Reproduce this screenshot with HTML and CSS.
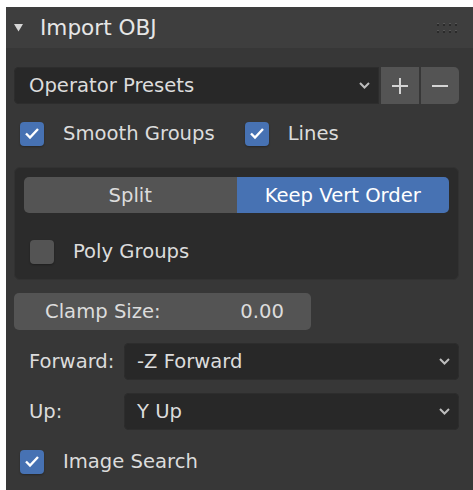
FILE: index.html
```html
<!DOCTYPE html>
<html>
<head>
<meta charset="utf-8">
<link rel="stylesheet" href="styles.css">
</head>
<body>
<div class="panel">
  <div class="header">
    <svg class="disclosure" width="9" height="8" viewBox="0 0 9 8"><path d="M0 0 H9 L4.5 7.5 Z" fill="#d6d6d6"/></svg>
    <span class="title">Import OBJ</span>
    <svg class="grip" width="22" height="12" viewBox="0 0 22 12">
      <g fill="#2a2a2a">
        <rect x="0" y="1" width="2" height="2"/><rect x="6" y="1" width="2" height="2"/><rect x="12" y="1" width="2" height="2"/><rect x="18" y="1" width="2" height="2"/>
        <rect x="0" y="8" width="2" height="2"/><rect x="6" y="8" width="2" height="2"/><rect x="12" y="8" width="2" height="2"/><rect x="18" y="8" width="2" height="2"/>
      </g>
      <g fill="#555555">
        <rect x="0" y="0" width="2" height="1"/><rect x="6" y="0" width="2" height="1"/><rect x="12" y="0" width="2" height="1"/><rect x="18" y="0" width="2" height="1"/>
        <rect x="0" y="7" width="2" height="1"/><rect x="6" y="7" width="2" height="1"/><rect x="12" y="7" width="2" height="1"/><rect x="18" y="7" width="2" height="1"/>
      </g>
    </svg>
  </div>
  <div class="content">
    <div class="presets">
      <div class="menu presets-menu">
        <span>Operator Presets</span>
        <svg class="chev" width="11" height="7" viewBox="0 0 11 7"><path d="M1 1 L5.5 5.5 L10 1" fill="none" stroke="#bdbdbd" stroke-width="2"/></svg>
      </div>
      <div class="tool-btn"><svg width="18" height="18" viewBox="0 0 18 18"><path d="M9 1 V17 M1 9 H17" stroke="#d4d4d4" stroke-width="2"/></svg></div>
      <div class="tool-btn last"><svg width="18" height="18" viewBox="0 0 18 18"><path d="M1 9 H17" stroke="#d4d4d4" stroke-width="2"/></svg></div>
    </div>

    <div class="row checks">
      <span class="check on"><svg width="16" height="13" viewBox="0 0 16 13"><path d="M2 6.5 L6 10.5 L14 2" fill="none" stroke="#fff" stroke-width="2.4"/></svg></span>
      <span class="label">Smooth Groups</span>
      <span class="check on second"><svg width="16" height="13" viewBox="0 0 16 13"><path d="M2 6.5 L6 10.5 L14 2" fill="none" stroke="#fff" stroke-width="2.4"/></svg></span>
      <span class="label">Lines</span>
    </div>

    <div class="box">
      <div class="segment">
        <div class="seg">Split</div>
        <div class="seg active">Keep Vert Order</div>
      </div>
      <div class="row poly">
        <span class="check"></span>
        <span class="label">Poly Groups</span>
      </div>
    </div>

    <div class="number">
      <span>Clamp Size:</span>
      <span>0.00</span>
    </div>

    <div class="prop">
      <span class="prop-label">Forward:</span>
      <div class="menu">
        <span>-Z Forward</span>
        <svg class="chev" width="11" height="7" viewBox="0 0 11 7"><path d="M1 1 L5.5 5.5 L10 1" fill="none" stroke="#bdbdbd" stroke-width="2"/></svg>
      </div>
    </div>

    <div class="prop">
      <span class="prop-label">Up:</span>
      <div class="menu">
        <span>Y Up</span>
        <svg class="chev" width="11" height="7" viewBox="0 0 11 7"><path d="M1 1 L5.5 5.5 L10 1" fill="none" stroke="#bdbdbd" stroke-width="2"/></svg>
      </div>
    </div>

    <div class="row image-search">
      <span class="check on"><svg width="16" height="13" viewBox="0 0 16 13"><path d="M2 6.5 L6 10.5 L14 2" fill="none" stroke="#fff" stroke-width="2.4"/></svg></span>
      <span class="label">Image Search</span>
    </div>
  </div>
</div>
</body>
</html>
```

FILE: styles.css
```css
html, body {
  margin: 0;
  padding: 0;
  background: #ffffff;
}

body {
  font-family: "DejaVu Sans", sans-serif;
  font-size: 19.6px;
  color: #dcdcdc;
  overflow: hidden;
}

.panel {
  margin: 7px 0 0 6px;
  height: 483px;
  background: #373737;
}

.header {
  height: 41px;
  background: #3e3e3e;
  display: flex;
  align-items: center;
  padding-left: 8px;
  padding-right: 14px;
}

.disclosure {
  margin-top: 1px;
}

.title {
  margin-left: 17px;
  font-size: 21.6px;
  color: #e6e6e6;
  flex: 1;
}

.grip {
  margin-top: 2px;
}

.content {
  padding: 19px 14px 0 8px;
  display: flex;
  flex-direction: column;
}

.presets {
  display: flex;
  height: 37px;
  gap: 2px;
}

.menu {
  flex: 1;
  background: #282828;
  border-radius: 5px;
  display: flex;
  align-items: center;
  padding-left: 13px;
  padding-right: 9px;
  box-shadow: inset 0 0 0 1px #2d2d2d;
}

.menu span {
  flex: 1;
}

.presets-menu {
  border-radius: 5px 0 0 5px;
  padding-left: 15px;
}

.tool-btn {
  width: 38px;
  background: #545454;
  display: flex;
  align-items: center;
  justify-content: center;
}

.tool-btn.last {
  border-radius: 0 5px 5px 0;
}

.row {
  height: 37px;
  display: flex;
  align-items: center;
}

.check {
  width: 24px;
  height: 24px;
  border-radius: 4px;
  background: #545454;
  display: flex;
  align-items: center;
  justify-content: center;
  box-shadow: 0 1px 2px rgba(0, 0, 0, 0.3);
}

.check.on {
  background: #4772b3;
}

.label {
  margin-left: 19px;
}

.checks {
  margin-top: 11px;
  padding-left: 6px;
}

.check.second {
  margin-left: 30px;
}

.box {
  margin-top: 15px;
  height: 113px;
  box-sizing: border-box;
  background: #2b2b2b;
  border: 1px solid #323232;
  border-radius: 6px;
  padding: 9px 9px 0 9px;
}

.segment {
  display: flex;
  height: 36px;
}

.seg {
  flex: 1;
  display: flex;
  align-items: center;
  justify-content: center;
  background: #545454;
  border-radius: 5px 0 0 5px;
}

.seg.active {
  background: #4772b3;
  color: #ffffff;
  border-radius: 0 5px 5px 0;
}

.poly {
  margin-top: 20px;
  padding-left: 6px;
}

.number {
  margin-top: 13px;
  height: 37px;
  width: 297px;
  box-sizing: border-box;
  background: #545454;
  border-radius: 5px;
  display: flex;
  align-items: center;
  justify-content: space-between;
  padding: 0 27px 0 31px;
}

.prop {
  margin-top: 13px;
  height: 37px;
  display: flex;
}

.prop-label {
  width: 110px;
  padding-left: 15px;
  box-sizing: border-box;
  display: flex;
  align-items: center;
}

.image-search {
  margin-top: 13px;
  padding-left: 6px;
}
```
